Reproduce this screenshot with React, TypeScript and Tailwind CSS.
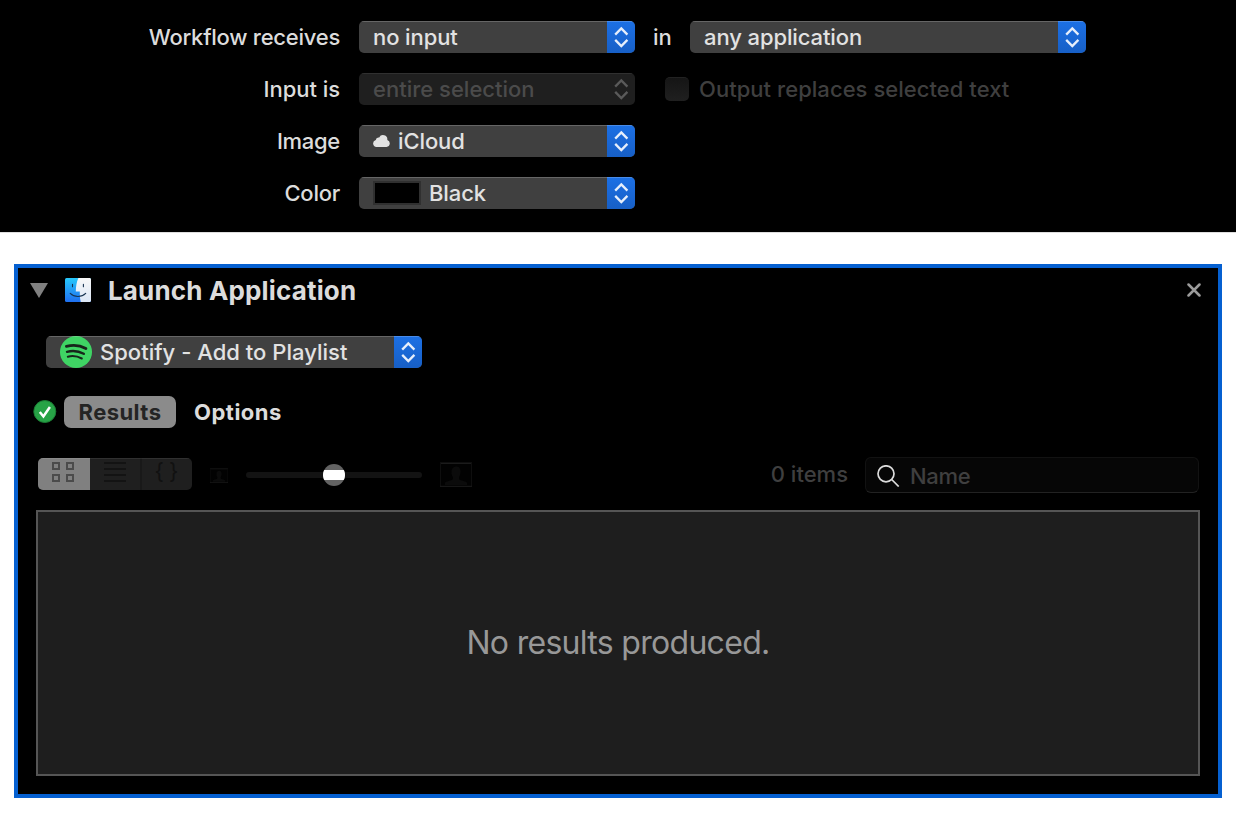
import type { ReactNode } from "react";

function Chevrons({ className }: { className: string }) {
  return (
    <svg width="28" height="32" viewBox="0 0 28 32" fill="none" strokeWidth="2.3" className={className}>
      <path d="M8.2 13.6 14.3 7.4l6.1 6.2M8.2 18.9l6.1 6.2 6.1-6.2" />
    </svg>
  );
}

function Popup({ width, disabled, children }: { width: string; disabled?: boolean; children: ReactNode }) {
  return (
    <div
      className={`relative flex h-8 shrink-0 items-center overflow-hidden rounded-[5px] pl-3.5 ${width} ${
        disabled ? "bg-[#1f1f1f] text-[#4b4b4b]" : "bg-[#404040] text-[#e2e2e2]"
      }`}
    >
      {children}
      <div className={`ml-auto h-8 w-7 ${disabled ? "" : "bg-linear-to-b from-[#1c70e5] to-[#175fc6]"}`}>
        <Chevrons className={disabled ? "stroke-[#5a5a5a]" : "stroke-[#e6eefb]"} />
      </div>
      <div className={`pointer-events-none absolute inset-x-0 top-0 h-px ${disabled ? "bg-white/8" : "bg-white/20"}`} />
    </div>
  );
}

function Row({ label, spacing, children }: { label: string; spacing: string; children: ReactNode }) {
  return (
    <div className="flex h-8 items-center">
      <div className={`mr-[19px] w-[340px] text-right text-[#dcdcdc] ${spacing}`}>{label}</div>
      {children}
    </div>
  );
}

function Finder() {
  return (
    <svg width="26" height="24" viewBox="0 0 26 24">
      <defs>
        <linearGradient id="face" x1="0" y1="0" x2="0" y2="1">
          <stop offset="0" stopColor="#27c8fb" />
          <stop offset="1" stopColor="#1f6ff0" />
        </linearGradient>
        <linearGradient id="side" x1="0" y1="0" x2="0" y2="1">
          <stop offset="0" stopColor="#f8f8f8" />
          <stop offset="1" stopColor="#dbe6f5" />
        </linearGradient>
      </defs>
      <rect width="26" height="24" rx="1.5" fill="url(#face)" />
      <path d="M13.4 0C11.6 4 10.9 8.5 10.8 13.4h4c-.1 4 .2 7.5 1 10.6h8.7c.8 0 1.5-.7 1.5-1.5v-21c0-.8-.7-1.5-1.5-1.5z" fill="url(#side)" />
      <path d="M7.5 6.2v2.6M18.4 6.2v2.6" stroke="#17324f" strokeWidth="1.1" strokeLinecap="round" />
      <path d="M5.2 15.4c4.2 4.1 11.4 4.1 15.5 0" fill="none" stroke="#17324f" strokeWidth="1.1" strokeLinecap="round" />
    </svg>
  );
}

function Spotify() {
  return (
    <svg width="32" height="32" viewBox="0 0 32 32" fill="none" strokeLinecap="round">
      <circle cx="16" cy="16" r="16" fill="#3fd464" />
      <g stroke="#17251b">
        <path d="M6.4 10.4c6.5-1.8 13.7-1.1 19.5 2.1" strokeWidth="2.8" />
        <path d="M7 15.8c5.6-1.5 11.5-.9 16.8 2" strokeWidth="2.4" />
        <path d="M7.8 20.7c4.6-1.1 9.6-.6 14 1.8" strokeWidth="2" />
      </g>
    </svg>
  );
}

function Portrait({ width, height }: { width: number; height: number }) {
  return (
    <svg width={width} height={height} viewBox="0 0 32 25" preserveAspectRatio="none">
      <rect x=".5" y=".5" width="31" height="24" fill="#020202" stroke="#0e0e0e" />
      <path d="M1 1.5h30M0 24.3h32" stroke="#1b1b1b" />
      <path d="M5 23v-2c0-2 7-2 8-4v-2c-2-2-3-10 3-10.500s5 8.500 3 10.500v2c1 2 8 2 8 4v2z" fill="#0b0b0b" />
    </svg>
  );
}

export default function App() {
  return (
    <div className="h-[820px] w-[1236px] overflow-hidden bg-white font-['Inter',sans-serif] text-[22px] leading-8 font-[450] tracking-[-0.1px] whitespace-pre">
      <section className="flex h-[232px] flex-col gap-5 bg-black pt-[21px] shadow-[0_1px_0_#dedede]">
        <Row label="Workflow receives" spacing="tracking-[-0.25px]">
          <Popup width="w-[276px]"><span>no input</span></Popup>
          <span className="ml-[18px] w-[37px] text-[#dcdcdc]">in</span>
          <Popup width="w-[396px]"><span>any application</span></Popup>
        </Row>
        <Row label="Input is" spacing="tracking-[-0.05px]">
          <Popup width="w-[276px]" disabled><span className="tracking-[0px]">entire selection</span></Popup>
          <span className="ml-[30px] size-6 rounded-[5px] border-t border-[#222] bg-linear-to-b from-[#151515] to-[#202020]" />
          <span className="ml-2.5 tracking-[0.04px] text-[#3f3f3f]">Output replaces selected text</span>
        </Row>
        <Row label="Image" spacing="tracking-[-0.3px]">
          <Popup width="w-[276px]">
            <svg width="17" height="12" viewBox="0 0 17 12" className="mr-2" fill="#e2e2e2">
              <path d="M3.500 12a3.500 3.500 0 0 1-.7-6.900A2.900 2.900 0 0 1 6.200 2.500 4.300 4.300 0 0 1 14.300 5 3.600 3.600 0 0 1 13.500 12z" />
            </svg>
            <span>iCloud</span>
          </Popup>
        </Row>
        <Row label="Color" spacing="tracking-[-0.25px]">
          <Popup width="w-[276px]">
            <span className="mr-2 h-6 w-12 border-2 border-[#303030] bg-black" />
            <span>Black</span>
          </Popup>
        </Row>
      </section>

      <section className="mx-3.5 mt-8 flex h-[534px] flex-col border-4 border-[#0560d1] bg-black">
        <header className="flex h-[45px] items-center pr-[17px] pl-3">
          <svg width="18" height="15" viewBox="0 0 18 15" fill="#808080"><path d="M0 0h18L9 15z" /></svg>
          <span className="mb-0.5 ml-[17px]"><Finder /></span>
          <h1 className="ml-[17px] text-[26px] font-bold tracking-[0.16px] text-[#dcdcdc]">Launch Application</h1>
          <svg width="14" height="14" viewBox="0 0 14 14" className="mb-0.5 ml-auto" stroke="#9b9b9b" strokeWidth="2.500" strokeLinecap="round">
            <path d="m1.500 1.500 11 11m0-11-11 11" />
          </svg>
        </header>
        <div className="mt-[23px] ml-7 flex">
          <Popup width="w-[376px]">
            <Spotify />
            <span className="ml-2 tracking-[0.02px]">Spotify - Add to Playlist</span>
          </Popup>
        </div>
        <nav className="mt-7 ml-[15px] flex h-8 items-center font-bold">
          <svg width="24" height="23" viewBox="0 0 24 23" className="mb-0.5" fill="none">
            <circle cx="11.800" cy="11.500" r="11" fill="#27a346" stroke="#1b7d35" />
            <path d="m6.800 12 3.600 4.500 6.500-9.500" stroke="#fff" strokeWidth="2.500" />
          </svg>
          <span className="ml-[7px] flex h-8 w-28 items-center justify-center rounded-[7px] bg-[#8b8b8b] tracking-[0.45px] text-[#242424]">Results</span>
          <span className="ml-[18px] tracking-[0.5px] text-[#dcdcdc]">Options</span>
        </nav>
        <div className="mt-[29px] flex h-9 items-center pr-[19px] pl-5">
          <div className="relative mb-0.5 flex h-8 w-[154px] overflow-hidden rounded-[5px] bg-[#1f1f1f]">
            <div className="w-[52px] bg-[#808080]">
              <svg width="52" height="32" viewBox="0 0 52 32" fill="none" stroke="#4b4b4b" strokeWidth="2">
                <path d="M15 5h6v6h-6zM29 5h6v6h-6zM15 17h6v6h-6zM29 17h6v6h-6z" />
              </svg>
            </div>
            <div className="w-[50px]">
              <svg width="50" height="32" viewBox="0 0 50 32" stroke="#131313" strokeWidth="2">
                <path d="M14 5h22M14 11h22M14 17h22M14 23h22" />
              </svg>
            </div>
            <div className="flex flex-1 justify-center border-l-2 border-[#191919] pl-1 leading-[27px] font-normal tracking-[5px] text-[#111]">{"{}"}</div>
            <div className="absolute inset-x-0 top-0 h-px bg-white/8" />
          </div>
          <span className="ml-[18px] pt-px"><Portrait width={18} height={15} /></span>
          <div className="relative ml-[18px] h-1.5 w-44 rounded-full bg-[#131313]">
            <div className="absolute top-[-8px] left-[77px] h-[22px] w-[22px] overflow-hidden rounded-full bg-[#636363]">
              <div className="mt-1.5 h-2.5 bg-white" />
            </div>
          </div>
          <span className="mb-0.5 ml-[18px]"><Portrait width={32} height={25} /></span>
          <span className="mr-[17px] mb-0.5 ml-auto tracking-[0px] text-[#3f3f3f]">0 items</span>
          <div className="flex h-9 w-[334px] items-center rounded-[6px] border border-[#121212] border-b-[#222] bg-[#060606] pl-[11px]">
            <svg width="23" height="22" viewBox="0 0 23 22" className="mt-0.5" fill="none" stroke="#dcdcdc" strokeWidth="1.700">
              <circle cx="9" cy="8.800" r="8" />
              <path d="m14.700 14.500 7 7" />
            </svg>
            <span className="ml-2.5 pt-0.5 tracking-[-0.3px] text-[#3f3f3f]">Name</span>
          </div>
        </div>
        <div className="mx-[18px] mt-[17px] flex h-[266px] items-center justify-center border-2 border-[#555] bg-[#1e1e1e] text-[32px] font-normal tracking-[-0.7px] text-[#989898]">
          No results produced.
        </div>
      </section>
    </div>
  );
}
